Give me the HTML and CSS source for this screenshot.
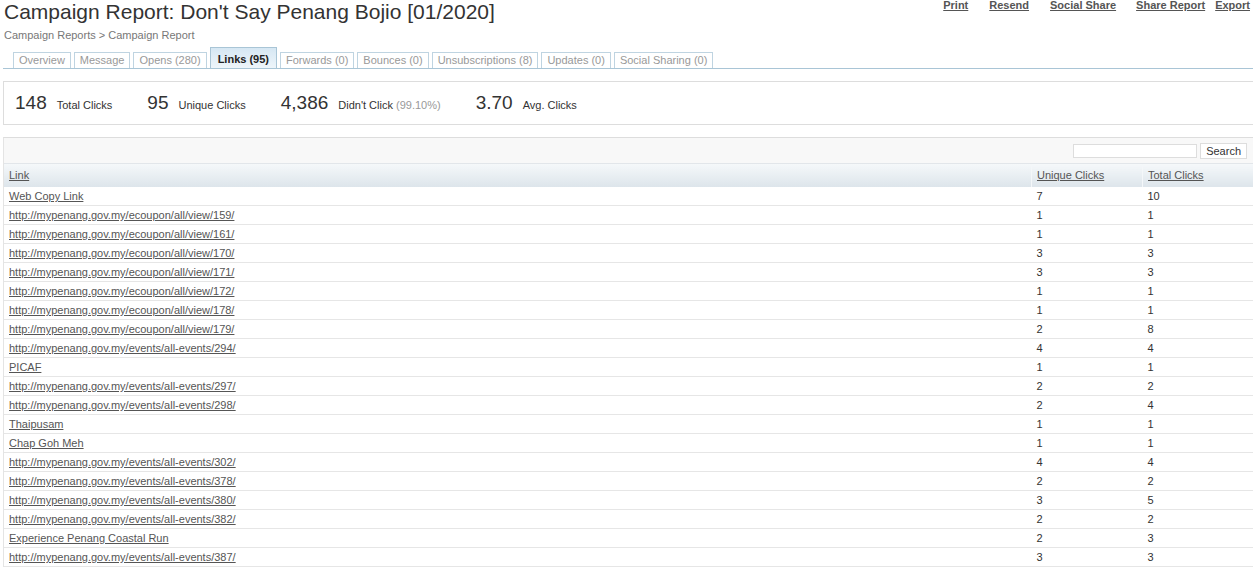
FILE: index.html
```html
<!DOCTYPE html>
<html>
<head>
<meta charset="utf-8">
<title>Campaign Report</title>
<link rel="stylesheet" href="styles.css">
</head>
<body>
<div class="page">
  <div class="top">
    <div class="heading">
      <h1 class="title">Campaign Report: Don't Say Penang Bojio [01/2020]</h1>
      <div class="crumbs"><a href="#">Campaign Reports</a> &gt; Campaign Report</div>
    </div>
    <nav class="actions">
      <a href="#" class="act act-print">Print</a>
      <a href="#" class="act act-resend">Resend</a>
      <a href="#" class="act act-social">Social Share</a>
      <a href="#" class="act act-share">Share Report</a>
      <a href="#" class="act act-export">Export</a>
    </nav>
  </div>

  <ul class="tabs">
    <li class="tab">Overview</li>
    <li class="tab">Message</li>
    <li class="tab">Opens (280)</li>
    <li class="tab active">Links (95)</li>
    <li class="tab">Forwards (0)</li>
    <li class="tab">Bounces (0)</li>
    <li class="tab">Unsubscriptions (8)</li>
    <li class="tab">Updates (0)</li>
    <li class="tab">Social Sharing (0)</li>
  </ul>

  <div class="stats">
    <div class="stat"><span class="num">148</span><span class="lbl">Total Clicks</span></div>
    <div class="stat"><span class="num">95</span><span class="lbl">Unique Clicks</span></div>
    <div class="stat"><span class="num">4,386</span><span class="lbl">Didn't Click <span class="pct">(99.10%)</span></span></div>
    <div class="stat"><span class="num">3.70</span><span class="lbl">Avg. Clicks</span></div>
  </div>

  <div class="grid">
    <div class="toolbar">
      <input type="text" class="search-box">
      <button class="search-btn">Search</button>
    </div>
    <table class="links">
      <thead>
        <tr><th class="c-link"><a href="#">Link</a></th><th class="c-num"><a href="#">Unique Clicks</a></th><th class="c-num"><a href="#">Total Clicks</a></th></tr>
      </thead>
      <tbody>
        <tr><td><a href="#">Web Copy Link</a></td><td>7</td><td>10</td></tr>
        <tr><td><a href="#">http://mypenang.gov.my/ecoupon/all/view/159/</a></td><td>1</td><td>1</td></tr>
        <tr><td><a href="#">http://mypenang.gov.my/ecoupon/all/view/161/</a></td><td>1</td><td>1</td></tr>
        <tr><td><a href="#">http://mypenang.gov.my/ecoupon/all/view/170/</a></td><td>3</td><td>3</td></tr>
        <tr><td><a href="#">http://mypenang.gov.my/ecoupon/all/view/171/</a></td><td>3</td><td>3</td></tr>
        <tr><td><a href="#">http://mypenang.gov.my/ecoupon/all/view/172/</a></td><td>1</td><td>1</td></tr>
        <tr><td><a href="#">http://mypenang.gov.my/ecoupon/all/view/178/</a></td><td>1</td><td>1</td></tr>
        <tr><td><a href="#">http://mypenang.gov.my/ecoupon/all/view/179/</a></td><td>2</td><td>8</td></tr>
        <tr><td><a href="#">http://mypenang.gov.my/events/all-events/294/</a></td><td>4</td><td>4</td></tr>
        <tr><td><a href="#">PICAF</a></td><td>1</td><td>1</td></tr>
        <tr><td><a href="#">http://mypenang.gov.my/events/all-events/297/</a></td><td>2</td><td>2</td></tr>
        <tr><td><a href="#">http://mypenang.gov.my/events/all-events/298/</a></td><td>2</td><td>4</td></tr>
        <tr><td><a href="#">Thaipusam</a></td><td>1</td><td>1</td></tr>
        <tr><td><a href="#">Chap Goh Meh</a></td><td>1</td><td>1</td></tr>
        <tr><td><a href="#">http://mypenang.gov.my/events/all-events/302/</a></td><td>4</td><td>4</td></tr>
        <tr><td><a href="#">http://mypenang.gov.my/events/all-events/378/</a></td><td>2</td><td>2</td></tr>
        <tr><td><a href="#">http://mypenang.gov.my/events/all-events/380/</a></td><td>3</td><td>5</td></tr>
        <tr><td><a href="#">http://mypenang.gov.my/events/all-events/382/</a></td><td>2</td><td>2</td></tr>
        <tr><td><a href="#">Experience Penang Coastal Run</a></td><td>2</td><td>3</td></tr>
        <tr><td><a href="#">http://mypenang.gov.my/events/all-events/387/</a></td><td>3</td><td>3</td></tr>
      </tbody>
    </table>
  </div>
</div>
</body>
</html>
```
FILE: styles.css
```css
html, body {
  margin: 0;
  padding: 0;
  background: #fff;
}

body {
  font-family: "Liberation Sans", Arial, sans-serif;
  font-size: 11px;
  color: #333;
}

.page {
  padding: 0 0 0 3px;
}

/* header: title + breadcrumb on the left, action links on the right */
.top {
  display: flex;
  justify-content: space-between;
  align-items: flex-start;
}

.heading {
  padding-left: 1px;
}

.title {
  margin: 0;
  font-size: 21px;
  font-weight: normal;
  line-height: 24px;
  color: #333;
}

.crumbs {
  margin-top: 4px;
  line-height: 14px;
  color: #777;
}

.crumbs a {
  color: #777;
  text-decoration: none;
}

.actions {
  display: flex;
  padding-top: 0;
  line-height: 11px;
}

.act {
  font-weight: bold;
  color: #555;
  text-decoration: underline;
}

.act-print { margin-right: 21px; }
.act-resend { margin-right: 21px; }
.act-social { margin-right: 20px; }
.act-share { margin-right: 10px; }
.act-export { margin-right: 3px; }

/* tab strip */
.tabs {
  list-style: none;
  margin: 5px 0 0 0;
  padding: 0 0 0 10px;
  display: flex;
  align-items: flex-end;
  gap: 3px;
  border-bottom: 1px solid #a9c5d6;
}

.tab {
  height: 15px;
  line-height: 15px;
  padding: 0 5px;
  border: 1px solid #bfd4e1;
  border-bottom: none;
  color: #999;
}

.tab.active {
  height: 20px;
  line-height: 22px;
  padding: 0 7px;
  font-weight: bold;
  color: #222;
  border-color: #a9c5d6;
  background: linear-gradient(#d6e7f3, #eef5fa);
}

/* summary numbers */
.stats {
  margin-top: 12px;
  height: 42px;
  border: 1px solid #ddd;
  border-right: none;
  display: flex;
  align-items: center;
  gap: 35px;
  padding-left: 11px;
}

.stat {
  display: flex;
  align-items: baseline;
  gap: 10px;
}

.num {
  font-size: 19px;
  color: #333;
}

.lbl {
  font-size: 11px;
  color: #333;
}

.pct {
  color: #999;
}

/* links grid */
.grid {
  margin-top: 12px;
  border-top: 1px solid #ddd;
  border-left: 1px solid #e4e4e4;
}

.toolbar {
  height: 25px;
  background: #f8f8f8;
  border-bottom: 1px solid #e2e6ea;
  display: flex;
  align-items: center;
  justify-content: flex-end;
  gap: 3px;
  padding-right: 6px;
}

.search-box {
  width: 120px;
  height: 12px;
  padding: 0 1px;
  margin: 0;
  border: 1px solid #ddd;
  background: #fff;
}

.search-btn {
  height: 16px;
  padding: 0 5px;
  margin: 0;
  font-family: "Liberation Sans", Arial, sans-serif;
  font-size: 11px;
  color: #333;
  background: #fff;
  border: 1px solid #ddd;
  line-height: 14px;
}

.links {
  width: 100%;
  border-collapse: collapse;
  table-layout: fixed;
}

.links th {
  padding: 4px 0 5px 5px;
  text-align: left;
  font-weight: normal;
  vertical-align: bottom;
  background: linear-gradient(#f5f8fa, #dde5eb);
  border-left: 1px solid #f4f7f9;
  line-height: 14px;
}

.links th:first-child {
  border-left: none;
}

.links th a {
  color: #555;
  text-decoration: underline;
}

.c-num {
  width: 105px;
}

.links td {
  height: 18px;
  padding: 0 0 0 5px;
  border-bottom: 1px solid #e6e6e6;
  line-height: 18px;
  color: #333;
  white-space: nowrap;
}

.links td a {
  color: #555;
  text-decoration: underline;
}
```
